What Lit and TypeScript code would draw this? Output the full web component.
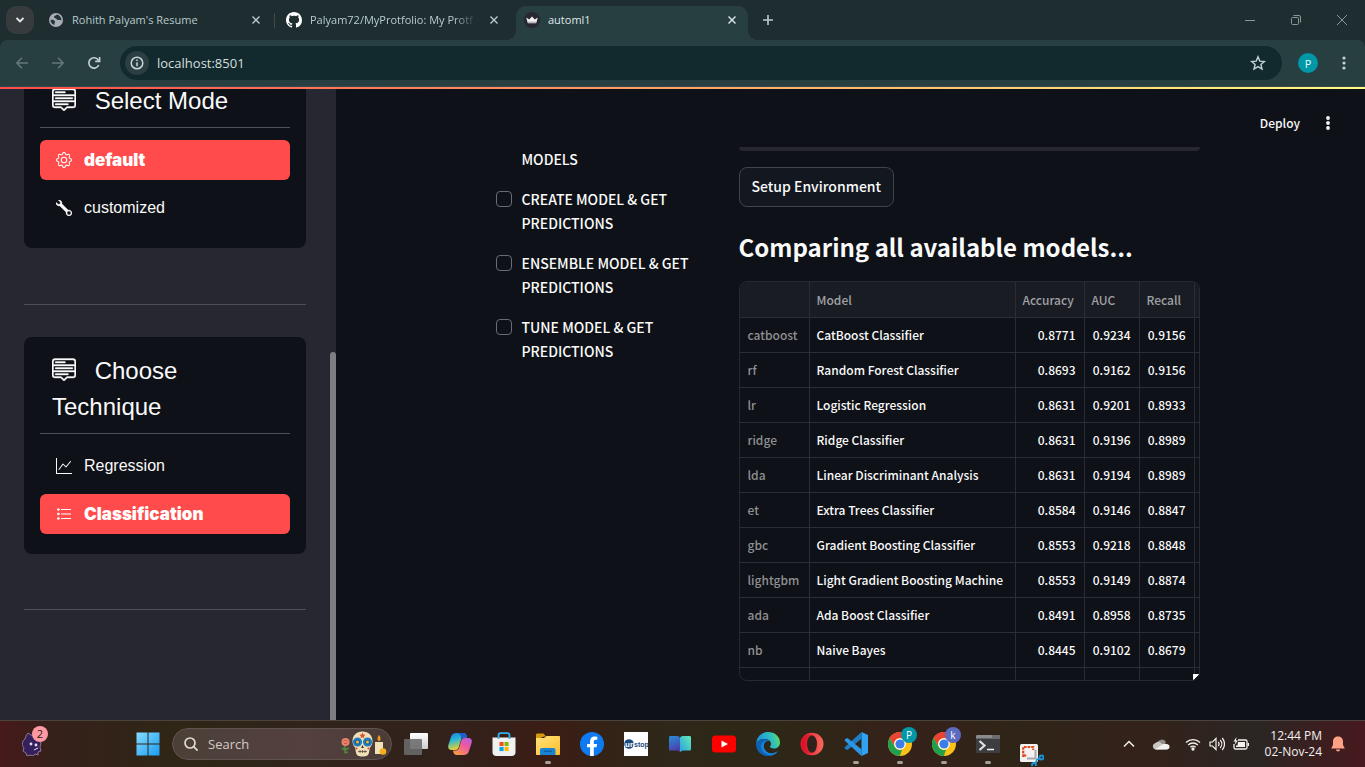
import { LitElement, html, css, svg, nothing } from "lit";
import { customElement, property } from "lit/decorators.js";
import { classMap } from "lit/directives/class-map.js";

const menuUp = svg`<svg class="glyph" viewBox="0 0 16 16" width="24" height="24" fill="currentColor" stroke="currentColor" stroke-width=".25" aria-hidden="true"><path d="M7.646 15.854a.5.5 0 0 0 .708 0L10.207 14H14a2 2 0 0 0 2-2V3a2 2 0 0 0-2-2H2a2 2 0 0 0-2 2v9a2 2 0 0 0 2 2h3.793zM1 9V6h14v3zm14 1v2a1 1 0 0 1-1 1h-3.793a1 1 0 0 0-.707.293l-1.5 1.5-1.5-1.5A1 1 0 0 0 5.793 13H2a1 1 0 0 1-1-1v-2zm0-5H1V3a1 1 0 0 1 1-1h12a1 1 0 0 1 1 1zM2 11.5a.5.5 0 0 0 .5.5h8a.5.5 0 0 0 0-1h-8a.5.5 0 0 0-.5.5m0-4a.5.5 0 0 0 .5.5h11a.5.5 0 0 0 0-1h-11a.5.5 0 0 0-.5.5m0-4a.5.5 0 0 0 .5.5h6a.5.5 0 0 0 0-1h-6a.5.5 0 0 0-.5.5"/></svg>`;

const optionIcons: Record<string, unknown> = {
  gear: svg`<svg viewBox="0 0 16 16" width="16" height="16" fill="currentColor" aria-hidden="true"><path d="M8 4.754a3.246 3.246 0 1 0 0 6.492 3.246 3.246 0 0 0 0-6.492M5.754 8a2.246 2.246 0 1 1 4.492 0 2.246 2.246 0 0 1-4.492 0"/><path d="M9.796 1.343c-.527-1.79-3.065-1.79-3.592 0l-.094.319a.873.873 0 0 1-1.255.52l-.292-.16c-1.64-.892-3.433.902-2.54 2.541l.159.292a.873.873 0 0 1-.52 1.255l-.319.094c-1.79.527-1.79 3.065 0 3.592l.319.094a.873.873 0 0 1 .52 1.255l-.16.292c-.892 1.64.901 3.434 2.541 2.54l.292-.159a.873.873 0 0 1 1.255.52l.094.319c.527 1.79 3.065 1.79 3.592 0l.094-.319a.873.873 0 0 1 1.255-.52l.292.16c1.64.893 3.434-.902 2.54-2.541l-.159-.292a.873.873 0 0 1 .52-1.255l.319-.094c1.79-.527 1.79-3.065 0-3.592l-.319-.094a.873.873 0 0 1-.52-1.255l.16-.292c.893-1.64-.902-3.433-2.541-2.54l-.292.159a.873.873 0 0 1-1.255-.52zm-2.633.283c.246-.835 1.428-.835 1.674 0l.094.319a1.873 1.873 0 0 0 2.693 1.115l.291-.16c.764-.415 1.6.42 1.184 1.185l-.159.292a1.873 1.873 0 0 0 1.116 2.692l.318.094c.835.246.835 1.428 0 1.674l-.319.094a1.873 1.873 0 0 0-1.115 2.693l.16.291c.415.764-.42 1.6-1.185 1.184l-.291-.159a1.873 1.873 0 0 0-2.693 1.116l-.094.318c-.246.835-1.428.835-1.674 0l-.094-.319a1.873 1.873 0 0 0-2.692-1.115l-.292.16c-.764.415-1.6-.42-1.184-1.185l.159-.291A1.873 1.873 0 0 0 1.945 8.93l-.319-.094c-.835-.246-.835-1.428 0-1.674l.319-.094A1.873 1.873 0 0 0 3.06 4.377l-.16-.292c-.415-.764.42-1.6 1.185-1.184l.292.159a1.873 1.873 0 0 0 2.692-1.115z"/></svg>`,
  wrench: svg`<svg viewBox="0 0 16 16" width="16" height="16" fill="currentColor" stroke="currentColor" stroke-width=".3" aria-hidden="true"><path d="M.102 2.223A3.004 3.004 0 0 0 3.78 5.897l6.341 6.252A3.003 3.003 0 0 0 13 16a3 3 0 1 0-.851-5.878L5.897 3.781A3.004 3.004 0 0 0 2.223.1l2.141 2.142L4 4l-1.757.364zm13.37 9.019.528.026.287.445.445.287.026.529L15 13l-.242.471-.026.529-.445.287-.287.445-.529.026L13 15l-.471-.242-.529-.026-.287-.445-.445-.287-.026-.529L11 13l.242-.471.026-.529.445-.287.287-.445.529-.026L13 11z"/></svg>`,
  graph: svg`<svg viewBox="0 0 16 16" width="16" height="16" fill="currentColor" aria-hidden="true"><path d="M0 0h1v15h15v1H0zm14.817 3.113a.5.5 0 0 1 .07.704l-4.5 5.5a.5.5 0 0 1-.74.037L7.06 6.767l-3.656 5.027a.5.5 0 0 1-.808-.588l4-5.5a.5.5 0 0 1 .758-.06l2.609 2.61 4.15-5.073a.5.5 0 0 1 .704-.07"/></svg>`,
  list: svg`<svg viewBox="0 0 16 16" width="16" height="16" fill="currentColor" aria-hidden="true"><path d="M5 3h10v1H5zM5 7.500h10v1H5zM5 12h10v1H5z"/><circle cx="2.400" cy="3.500" r="1.300"/><circle cx="2.400" cy="8" r="1.300"/><circle cx="2.400" cy="12.500" r="1.300"/></svg>`,
};

interface Option {
  label: string;
  icon: string;
  selected?: boolean;
}

@customElement("option-menu")
export class OptionMenu extends LitElement {
  @property() heading = "";
  @property({ attribute: false }) options: Option[] = [];

  static styles = css`
    :host {
      display: block;
      padding: 16px 16px 20px;
      border-radius: 8px;
      background: #0e1117;
      color: #fafafa;
      font-family: "Liberation Sans", Arial, sans-serif;
    }
    h2 {
      margin: 0;
      padding: 0 12px 8px;
      border-bottom: 1px solid #4d5157;
      font-size: 24px;
      font-weight: 400;
      line-height: 36px;
    }
    .glyph {
      margin-right: 12px;
      vertical-align: -2px;
    }
    ul {
      display: grid;
      gap: 8px;
      margin: 12px 0 0;
      padding: 0;
      list-style: none;
    }
    a {
      display: flex;
      align-items: center;
      gap: 12px;
      height: 40px;
      padding: 0 16px;
      border-radius: 6px;
      color: #fafafa;
      font-size: 16px;
      line-height: 24px;
      text-decoration: none;
    }
    .selected {
      background: #ff4b4b;
      color: #fff;
      font-family: Inter, sans-serif;
      font-size: 17px;
      font-weight: 900;
    }
  `;

  render() {
    return html`
      <h2>${menuUp} ${this.heading}</h2>
      <ul>
        ${this.options.map(
          (o) => html`<li>
            <a href="#${o.label}" class=${classMap({ selected: !!o.selected })}>${optionIcons[o.icon]}<span>${o.label}</span></a>
          </li>`
        )}
      </ul>
    `;
  }
}

const closeX = (s = 8) =>
  svg`<svg viewBox="0 0 8 8" width=${s} height=${s} fill="none" stroke="currentColor" stroke-width="1.400" aria-hidden="true"><path d="M.5.5l7 7M7.500.5l-7 7"/></svg>`;

const favicons: Record<string, unknown> = {
  globe: svg`<svg viewBox="0 0 16 16" width="16" height="16" aria-hidden="true"><circle cx="8" cy="8" r="7" fill="#a9adb5"/><path d="M2.500 8c2-.6 4 .2 4.500 1.400.4 1.200-1 1.600-.6 3.600-2.200-.6-3.800-2.600-3.900-5zM9 2.600C7.800 3.800 6 3.600 6 5c0 1.600 2.200 1 3 2.400.6 1.200 2.600.2 4.500 1-.1-2.800-2-5.200-4.500-5.800z" fill="#243437"/></svg>`,
  github: svg`<svg viewBox="0 0 16 16" width="16" height="16" fill="#fff" aria-hidden="true"><path d="M8 0C3.580 0 0 3.580 0 8c0 3.540 2.290 6.530 5.470 7.590.4.070.55-.17.55-.38 0-.19-.010-.82-.010-1.490-2.010.37-2.530-.49-2.690-.94-.090-.23-.48-.94-.82-1.130-.28-.15-.68-.52-.010-.53.63-.010 1.080.58 1.230.82.72 1.210 1.870.87 2.330.66.070-.52.28-.87.51-1.070-1.780-.2-3.640-.89-3.640-3.950 0-.87.31-1.590.82-2.150-.080-.2-.36-1.020.080-2.120 0 0 .67-.21 2.200.82.64-.18 1.320-.27 2-.27s1.360.09 2 .27c1.530-1.040 2.200-.82 2.200-.82.44 1.100.16 1.920.08 2.120.51.56.82 1.270.82 2.150 0 3.070-1.870 3.750-3.650 3.950.29.25.54.73.54 1.480 0 1.070-.010 1.930-.010 2.200 0 .21.15.46.55.38A8.010 8.010 0 0 0 16 8c0-4.420-3.580-8-8-8"/></svg>`,
  crown: svg`<svg viewBox="0 0 16 16" width="16" height="16" aria-hidden="true"><circle cx="8" cy="8" r="8" fill="#262730"/><path d="M2.200 5.500 5.200 7.400 8 4.500l2.800 2.900 3-1.900-1.600 5.700H3.800z" fill="#f2f2f2"/><path d="M4 10.200h8" stroke="#8b8b90" stroke-width=".8"/></svg>`,
};

const chrome = svg`<circle cx="12" cy="12" r="12" fill="#fbc116"/><path d="M1.600 6A12 12 0 0 1 22.400 6H12a6 6 0 0 0-5.200 9z" fill="#ea4335"/><path d="M1.600 6 6.800 15A6 6 0 0 0 14 17.700L11.800 24A12 12 0 0 1 1.600 6z" fill="#1ea04f"/><circle cx="12" cy="12" r="5.800" fill="#fff"/><circle cx="12" cy="12" r="4.600" fill="#3b7de9"/>`;

interface TaskApp {
  name: string;
  art: unknown;
  running?: boolean;
  badge?: string;
  tint?: string;
  low?: boolean;
}

const apps: TaskApp[] = [
  {
    name: "Task View",
    art: svg`<defs><linearGradient id="tv" x2="0" y2="1"><stop stop-color="#fff"/><stop offset="1" stop-color="#ccc"/></linearGradient></defs><rect x="6" y="1" width="18" height="16" rx="1" fill="url(#tv)"/><rect x="0" y="7" width="18" height="16" rx="1" fill="#6b6b6b" fill-opacity=".88"/>`,
  },
  {
    name: "Copilot",
    art: svg`<defs><linearGradient id="cp1" x2="0.3" y2="1"><stop stop-color="#1b7fe0"/><stop offset=".45" stop-color="#27b8d8"/><stop offset="1" stop-color="#e9d229"/></linearGradient><linearGradient id="cp2" x1="1" x2="0.3" y2="1"><stop stop-color="#b15be8"/><stop offset=".5" stop-color="#ee5a9c"/><stop offset="1" stop-color="#f7974a"/></linearGradient></defs><path d="M8.500 1h7c1.600 0 2.500 1 3 2.500L19 5.500h-2.500c-2 0-3 1-3.600 2.800l-2 6.400C10.200 17 9.400 18 7 18H3.500C.5 18-.3 15.600.4 13L3 5C3.800 2.400 5.500 1 8.500 1z" fill="url(#cp1)"/><path d="M15.500 23h-7c-1.600 0-2.500-1-3-2.500L5 18.500h2.500c2 0 3-1 3.600-2.800l2-6.400C13.800 7 14.600 6 17 6h3.500c3 0 3.800 2.400 3.100 5L21 19c-.8 2.600-2.500 4-5.500 4z" fill="url(#cp2)"/><path d="M8.500 1h7c1.600 0 2.500 1 3 2.500L19 5.500h-2.500c-1.500 0-2.500.6-3.100 1.700C13 4 12 1 8.500 1z" fill="#1e5fd0"/>`,
  },
  {
    name: "Microsoft Store",
    art: svg`<path d="M.5 5.500h23V20c0 2.500-1.300 4-4 4h-15c-2.700 0-4-1.500-4-4z" fill="#f1f1f1"/><path d="M6.500 7V3.500C6.500 2 7 1.200 8.500 1.200h7c1.500 0 2 .8 2 2.300V7" fill="none" stroke="#2fb4e8" stroke-width="1.800"/><path d="M7.500 10H11.600V14.100H7.500z" fill="#f25022"/><path d="M12.500 10h4.100v4.100h-4.100z" fill="#7fba00"/><path d="M7.500 15H11.600v4.100H7.500z" fill="#00a4ef"/><path d="M12.500 15h4.100v4.100h-4.100z" fill="#ffb900"/>`,
  },
  {
    name: "File Explorer",
    running: true,
    art: svg`<defs><linearGradient id="fe" x2="1" y2="1"><stop stop-color="#ffe27a"/><stop offset="1" stop-color="#fcbf2c"/></linearGradient></defs><path d="M0 3c0-1 .6-1.500 1.500-1.500h6L10 4.500h-2L0 8z" fill="#d99a0a"/><path d="M0 6h8l2.500-2H23c.7 0 1 .4 1 1v17c0 .6-.4 1-1 1H1c-.6 0-1-.4-1-1z" fill="url(#fe)"/><path d="M4 23v-5c0-1.200.8-2 2-2h11.500c1.200 0 2 .8 2 2v5z" fill="#1a84d4"/><path d="M8 18.500h8v1.500H8z" fill="#0e61a8"/>`,
  },
  {
    name: "Facebook",
    art: svg`<circle cx="12" cy="12" r="12" fill="#0f7bf2"/><path d="M16.500 15.300l.6-3.400h-3.300V9.600c0-1 .5-1.900 2-1.900h1.500V4.800s-1.400-.3-2.700-.3c-2.800 0-4.500 1.700-4.500 4.700v2.700H7v3.400h3.100V24a12 12 0 0 0 3.700 0v-8.700z" fill="#fff"/>`,
  },
  {
    name: "Unstop",
    art: svg`<rect width="24" height="24" fill="#fff"/><circle cx="5" cy="12" r="4.800" fill="#1c4980"/><text x="1" y="15" font-family="Liberation Sans, sans-serif" font-weight="700" font-size="8" fill="#fff">un</text><text x="10" y="15" font-family="Liberation Sans, sans-serif" font-weight="700" font-size="7" fill="#1c4980">stop</text>`,
  },
  {
    name: "Microsoft 365",
    art: svg`<defs><linearGradient id="rd" x2=".3" y2="1"><stop stop-color="#2b8fd6"/><stop offset="1" stop-color="#4a3fae"/></linearGradient><linearGradient id="re" x2="1" y1="1" y2="0"><stop stop-color="#2a9fe0"/><stop offset="1" stop-color="#62ecb8"/></linearGradient></defs><path d="M1 5.500C1 4.500 1.700 4 2.500 4H9c2 0 3 1 3 2.500V20c-.8-1.200-2-1.500-3.500-1.500h-6C1.600 18.500 1 18 1 17z" fill="url(#rd)"/><path d="M23 5.500c0-1-.7-1.500-1.500-1.500H15c-2 0-3 1-3 2.500V20.500c.8-1.200 2-2 3.500-2h6c.9 0 1.500-.5 1.500-1.500z" fill="url(#re)"/>`,
  },
  {
    name: "YouTube",
    art: svg`<rect y="3.500" width="24" height="17" rx="3.500" fill="#f00"/><path d="M9.500 8.500 16 12l-6.500 3.500z" fill="#fff"/>`,
  },
  {
    name: "Microsoft Edge",
    art: svg`<defs><linearGradient id="eg" y1=".2" x2="1"><stop stop-color="#1d93dc"/><stop offset=".6" stop-color="#2cc0c0"/><stop offset="1" stop-color="#6ee04a"/></linearGradient></defs><path d="M0 12C.5 5 5.500 0 12 0c7.200 0 12 5 12 10.500 0 4-3 6-6 6-2.600 0-4-1-4-2 0-.7 1-1 1-2.600C15 9.500 12.500 7 9 7 4.500 7 .5 9.500 0 12z" fill="url(#eg)"/><path d="M0 12c.5-3 4-5 8.500-5 2 0 3.800.8 4.900 2-3-.5-5.600 1.500-5.600 5 0 4.500 4.200 8 9.200 7.200 2-.3 3.500-1.200 5-2.200C20 22 16.500 24 12 24 5.500 24 0 19 0 12z" fill="#0d62b4"/><path d="M7.800 14c0 4.500 4.200 8 9.200 7.200 2-.3 3.500-1.200 5-2.200-1 1.700-3 3.300-5 4.100C11 24 5 20 5 14.500c0-3 2-5.500 5.500-6 1.100-.1 2.300.1 2.900.5-3-.5-5.600 1.500-5.600 5z" fill="#1583d6"/>`,
  },
  {
    name: "Opera",
    art: svg`<defs><linearGradient id="op" x2="1"><stop stop-color="#e8102a"/><stop offset="1" stop-color="#f86a5e"/></linearGradient></defs><ellipse cx="12" cy="12" rx="11.500" ry="11.200" fill="url(#op)"/><path d="M12 3c-3 0-5.500 4-5.500 9s2.500 9 5.500 9c-5 2-10-2-10-9s5-11 10-9z" fill="#c00a1c" fill-opacity=".4"/><ellipse cx="12" cy="12" rx="5" ry="8.800" fill="#30211a"/>`,
  },
  {
    name: "Visual Studio Code",
    running: true,
    art: svg`<path d="M17.500 0 24 3v18l-6.500 3z" fill="#2fa4f2"/><path d="M17.500 0v6.800L3.500 18 .8 16.800v-1.500z" fill="#1c7ec9"/><path d="M17.500 24v-6.800L3.500 6 .8 7.200v1.500z" fill="#2b97e4"/>`,
  },
  { name: "Chrome, profile P", running: true, badge: "P", tint: "teal", art: chrome },
  { name: "Chrome, profile k", running: true, badge: "k", tint: "indigo", art: chrome },
  {
    name: "Terminal",
    running: true,
    art: svg`<rect y="3" width="24" height="18" rx="1.500" fill="#3d3e42"/><path d="M0 4.500C0 3.500.6 3 1.500 3h21c.9 0 1.500.5 1.500 1.500V6.500H0z" fill="#8b8b8e"/><path d="M16 3h6.500c.9 0 1.500.5 1.500 1.500V6.500h-8z" fill="#6d6d70"/><path d="M3.500 9 8.500 13.500l-5 4.500" fill="none" stroke="#e2e2e2" stroke-width="2.200"/><path d="M11 17.500h7" stroke="#f2f2f2" stroke-width="1.500"/>`,
  },
  {
    name: "Snipping Tool",
    low: true,
    art: svg`<rect x="0" y="2" width="18" height="18" rx="1.500" fill="#f2f2f2"/><path d="M3.200 15V5h10v3" fill="none" stroke="#e0491d" stroke-width="2.200" stroke-dasharray="2.600 1"/><path d="M3.200 13.500h3" stroke="#e0491d" stroke-width="2.200"/><path d="M15.500 8v8.500H7" fill="none" stroke="#a8a8a8" stroke-width="2"/><circle cx="21.500" cy="15.500" r="2" fill="none" stroke="#1997dc" stroke-width="1.800"/><circle cx="14" cy="23" r="2" fill="none" stroke="#1997dc" stroke-width="1.800"/><path d="M15.500 21.500l1.500-4 3-1" fill="none" stroke="#1997dc" stroke-width="1.600"/>`,
  },
];

const rows = [
  ["catboost", "CatBoost Classifier", "0.8771", "0.9234", "0.9156"],
  ["rf", "Random Forest Classifier", "0.8693", "0.9162", "0.9156"],
  ["lr", "Logistic Regression", "0.8631", "0.9201", "0.8933"],
  ["ridge", "Ridge Classifier", "0.8631", "0.9196", "0.8989"],
  ["lda", "Linear Discriminant Analysis", "0.8631", "0.9194", "0.8989"],
  ["et", "Extra Trees Classifier", "0.8584", "0.9146", "0.8847"],
  ["gbc", "Gradient Boosting Classifier", "0.8553", "0.9218", "0.8848"],
  ["lightgbm", "Light Gradient Boosting Machine", "0.8553", "0.9149", "0.8874"],
  ["ada", "Ada Boost Classifier", "0.8491", "0.8958", "0.8735"],
  ["nb", "Naive Bayes", "0.8445", "0.9102", "0.8679"],
  ["", "", "", "", ""],
];

@customElement("browser-chrome")
export class BrowserChrome extends LitElement {
  static styles = css`
    :host {
      display: block;
      background: #1d2d30;
      color: #b9cbcc;
      font-family: "Open Sans", "Noto Sans", sans-serif;
    }
    button {
      display: grid;
      place-items: center;
      padding: 0;
      border: 0;
      background: none;
      color: inherit;
      font: inherit;
    }
    .strip {
      display: flex;
      align-items: flex-start;
      height: 34px;
      padding: 6px 0 0 6px;
    }
    .search-tabs {
      width: 28px;
      height: 28px;
      margin-right: 6px;
      border-radius: 10px;
      background: #373b3d;
      color: #e6eaea;
    }
    .tab {
      position: relative;
      display: flex;
      align-items: center;
      gap: 8px;
      box-sizing: border-box;
      width: 238px;
      height: 28px;
      padding: 0 14px 0 8px;
      font-size: 11px;
      line-height: 16px;
    }
    .tab + .tab:not(.active)::before {
      content: "";
      position: absolute;
      left: -4px;
      top: 7px;
      width: 1px;
      height: 15px;
      background: #3d4a4d;
    }
    .active {
      width: 232px;
      height: 34px;
      padding-bottom: 6px;
      padding-right: 8px;
      border-radius: 10px 10px 0 0;
      background: #283f42;
      color: #dfe8e8;
    }
    .active::before,
    .active::after {
      content: "";
      position: absolute;
      bottom: 0;
      width: 10px;
      height: 10px;
    }
    .active::before {
      left: -10px;
      background: radial-gradient(circle at 0 0, transparent 10px, #283f42 10px);
    }
    .active::after {
      right: -10px;
      background: radial-gradient(circle at 100% 0, transparent 10px, #283f42 10px);
    }
    .title {
      flex: 1;
      overflow: hidden;
      white-space: nowrap;
    }
    .fade {
      mask-image: linear-gradient(to right, #000 86%, transparent 99%);
    }
    .close {
      width: 16px;
      height: 16px;
    }
    .add {
      width: 28px;
      height: 28px;
      margin-left: 6px;
    }
    .window {
      display: flex;
      margin-left: auto;
      color: #8d9799;
    }
    .window button {
      width: 46px;
      height: 28px;
    }
    .toolbar {
      display: flex;
      align-items: center;
      box-sizing: border-box;
      height: 47px;
      padding: 0 3px 0 4px;
      border-radius: 8px 8px 0 0;
      border-bottom: 1px solid #35484b;
      background: #283f42;
    }
    .nav {
      width: 36px;
      height: 34px;
      color: #c4d2d3;
    }
    .off {
      color: #64787a;
    }
    .address {
      display: flex;
      flex: 1;
      align-items: center;
      gap: 8px;
      height: 34px;
      margin: 0 8px;
      padding: 0 16px 0 5px;
      border-radius: 17px;
      background: #12292d;
    }
    .info {
      width: 24px;
      height: 24px;
      border-radius: 12px;
      background: #2b3f42;
    }
    input {
      flex: 1;
      min-width: 0;
      padding: 0;
      border: 0;
      outline: 0;
      background: none;
      color: #d5dfdf;
      font: 13px/20px "Open Sans", "Noto Sans", sans-serif;
    }
    .avatar {
      width: 20px;
      height: 20px;
      margin: 0 8px;
      border-radius: 10px;
      background: #0097a7;
      color: #e8fbfd;
      font-size: 11px;
    }
  `;

  private tab(icon: string, title: string, active = false, fade = false) {
    return html`<div class=${classMap({ tab: true, active })}>
      ${favicons[icon]}<span class=${classMap({ title: true, fade })}>${title}</span>
      <button class="close" aria-label="Close ${title}">${closeX()}</button>
    </div>`;
  }

  render() {
    return html`
      <div class="strip">
        <button class="search-tabs" aria-label="Search tabs">
          <svg viewBox="0 0 8 6" width="8" height="6" fill="none" stroke="currentColor" stroke-width="1.800"><path d="M.5 1 4 4.500 7.500 1" /></svg>
        </button>
        ${this.tab("globe", "Rohith Palyam's Resume")}
        ${this.tab("github", "Palyam72/MyProtfolio: My Protf", false, true)}
        ${this.tab("crown", "automl1", true)}
        <button class="add" aria-label="New tab">
          <svg viewBox="0 0 10 10" width="10" height="10" stroke="currentColor" stroke-width="1.600"><path d="M5 0v10M0 5h10" /></svg>
        </button>
        <div class="window">
          <button aria-label="Minimize"><svg viewBox="0 0 10 10" width="10" height="10" stroke="currentColor"><path d="M0 5.500h10" /></svg></button>
          <button aria-label="Restore">
            <svg viewBox="0 0 10 10" width="10" height="10" fill="none" stroke="currentColor"><rect x=".5" y="2.500" width="7" height="7" rx="1" /><path d="M2.500.5H8A1.500 1.500 0 0 1 9.500 2v5.500" /></svg>
          </button>
          <button aria-label="Close window"><svg viewBox="0 0 10 10" width="10" height="10" stroke="currentColor"><path d="M0 0l10 10M10 0 0 10" /></svg></button>
        </div>
      </div>
      <div class="toolbar">
        <button class="nav off" aria-label="Back"><svg viewBox="0 0 12 12" width="12" height="12" fill="none" stroke="currentColor" stroke-width="1.500"><path d="M12 6H1M6 .8.9 6 6 11.200" /></svg></button>
        <button class="nav off" aria-label="Forward"><svg viewBox="0 0 12 12" width="12" height="12" fill="none" stroke="currentColor" stroke-width="1.500"><path d="M0 6h11M6 .8 11.100 6 6 11.200" /></svg></button>
        <button class="nav" aria-label="Reload"><svg viewBox="0 0 14 14" width="14" height="14" fill="none" stroke="currentColor" stroke-width="1.600"><path d="M11.800 9a5.200 5.200 0 1 1-.6-5.200L12.400 5" /><path d="M12.600 1v4.400H8.200" /></svg></button>
        <div class="address">
          <button class="info" aria-label="Site information">
            <svg viewBox="0 0 14 14" width="14" height="14" fill="none" stroke="#c9d4d4" stroke-width="1.500"><circle cx="7" cy="7" r="5.800" /><path d="M7 6.200v4M7 3.600v1.500" /></svg>
          </button>
          <input aria-label="Address" .value=${"localhost:8501"} />
          <button class="star" aria-label="Bookmark">
            <svg viewBox="0 0 16 16" width="16" height="16" fill="none" stroke="#c4d2d3" stroke-width="1.400"><path d="m8 1.800 1.800 4.300 4.600.4-3.500 3 1.100 4.500L8 11.600 4 14l1.100-4.500-3.500-3 4.600-.4z" /></svg>
          </button>
        </div>
        <button class="avatar" aria-label="Profile">P</button>
        <button class="nav" aria-label="Menu"><svg viewBox="0 0 4 14" width="4" height="14" fill="currentColor"><circle cx="2" cy="2" r="1.600" /><circle cx="2" cy="7" r="1.600" /><circle cx="2" cy="12" r="1.600" /></svg></button>
      </div>
    `;
  }
}

@customElement("task-bar")
export class TaskBar extends LitElement {
  static styles = css`
    :host {
      display: flex;
      align-items: center;
      box-sizing: border-box;
      height: 47px;
      border-top: 1px solid #4a443c;
      background: linear-gradient(
        90deg,
        #47191b 0,
        #35211a 4%,
        #2f2616 13%,
        #30241b 22%,
        #32211c 33%,
        #3b1d15 40%,
        #2d2819 49%,
        #2f2617 60%,
        #36211a 66%,
        #2f2418 74%,
        #33221a 84%,
        #2b2623 92%,
        #47191e 100%
      );
      color: #f4f0ee;
      font-family: "Open Sans", "Noto Sans", sans-serif;
    }
    button {
      position: relative;
      display: grid;
      flex: none;
      place-items: center;
      width: 44px;
      height: 44px;
      padding: 0;
      border: 0;
      background: none;
      color: inherit;
      font: inherit;
    }
    .widgets {
      margin-left: 10px;
      margin-right: 72px;
    }
    .count {
      position: absolute;
      right: 6px;
      top: 4px;
      width: 16px;
      height: 16px;
      border-radius: 8px;
      background: #ff99a4;
      color: #221;
      font-size: 11px;
      line-height: 16px;
    }
    .search {
      display: flex;
      align-items: center;
      gap: 10px;
      box-sizing: border-box;
      width: 220px;
      height: 32px;
      margin: 0 2px;
      padding: 0 4px 0 11px;
      border: 1px solid #5f5450;
      border-radius: 16px;
      background: linear-gradient(90deg, #4b4038, #54403f 60%, #4a3c37);
    }
    .search svg {
      flex: none;
    }
    input {
      flex: 1;
      min-width: 0;
      padding: 0;
      border: 0;
      outline: 0;
      background: none;
      color: #cfc7c4;
      font: 13px/20px "Open Sans", "Noto Sans", sans-serif;
    }
    input::placeholder {
      color: #d3cbc8;
      opacity: 1;
    }
    .running::after {
      content: "";
      position: absolute;
      bottom: 2px;
      width: 6px;
      height: 3px;
      border-radius: 2px;
      background: #a5a09c;
    }
    .low {
      align-items: end;
    }
    .badge {
      position: absolute;
      right: 5px;
      top: 5px;
      width: 16px;
      height: 16px;
      border-radius: 8px;
      color: #fff;
      font-size: 10px;
      line-height: 16px;
    }
    .teal {
      background: #0097a7;
    }
    .indigo {
      background: #5c6bc0;
    }
    .tray {
      display: flex;
      align-items: center;
      margin-left: auto;
      padding-right: 19px;
    }
    .tray button {
      width: 24px;
    }
    .tray .wide {
      width: 40px;
    }
    .tray .clock {
      width: auto;
      margin-left: 12px;
      justify-items: end;
      align-content: center;
      font-size: 12px;
      line-height: 16px;
      white-space: nowrap;
    }
    .tray .bell {
      width: 16px;
      margin-left: 8px;
    }
  `;

  render() {
    return html`
      <button class="widgets" aria-label="Widgets">
        <svg viewBox="0 0 20 24" width="20" height="24"><path d="M4 4 6 1l3 2 4 1 3 4 3 3-1 4 1 4-3 1v3l-3-1-2 2-3-1-3 1-1-3-3-2 1-3-2-3 1-4 2-2z" fill="#35205e" stroke="#a58aa6" stroke-width=".8" /><circle cx="9" cy="12" r="1.400" fill="#e9def0" /><circle cx="14" cy="13" r="1.400" fill="#e9def0" /><path d="M12 18l4-2" stroke="#e9def0" /></svg>
        <span class="count">2</span>
      </button>
      <button aria-label="Start">
        <svg viewBox="0 0 24 24" width="24" height="24"><defs><linearGradient id="wn" x2="1" y2="1"><stop stop-color="#86dcff" /><stop offset="1" stop-color="#1a9cf2" /></linearGradient></defs><path d="M.5.5h11v11H.5zM12.500.5h11v11h-11zM.5 12.500h11v11H.5zM12.500 12.500h11v11h-11z" fill="url(#wn)" /></svg>
      </button>
      <div class="search">
        <svg viewBox="0 0 14 14" width="14" height="14" fill="none" stroke="#e0dbd8" stroke-width="1.700"><circle cx="6" cy="6" r="5" /><path d="m9.600 9.600 4 4" /></svg>
        <input placeholder="Search" aria-label="Search" />
        <svg viewBox="0 0 46 26" width="46" height="26" aria-hidden="true">
          <path d="M4 14v8M4 19l-3-2M4 19l4-2M4 22l3-1" stroke="#4f8a3c" stroke-width="1.600" fill="none" />
          <circle cx="4.500" cy="11" r="4" fill="#e8836a" /><path d="M2.500 10.500c1-1.500 3-1.500 4 0M3 12.500h3" stroke="#c65245" fill="none" />
          <path d="M21.500.5c6 0 10 4 10 9.500 0 3-1 5-2.500 6.500l-1 5c-.5 3-2.500 4-6.500 4s-6-1-6.500-4l-1-5C12.500 15 11.500 13 11.500 10c0-5.500 4-9.500 10-9.500z" fill="#f0dfb8" />
          <circle cx="16.500" cy="11" r="4.600" fill="#1f80c8" /><circle cx="26.500" cy="11" r="4.600" fill="#1f80c8" />
          <circle cx="16.500" cy="11" r="2.600" fill="#1a5c94" /><circle cx="26.500" cy="11" r="2.600" fill="#1a5c94" />
          <circle cx="16.500" cy="11" r="1.500" fill="#f2b92c" /><circle cx="26.500" cy="11" r="1.500" fill="#f2b92c" />
          <path d="m21.500 1.500 1 2 2 .3-1.500 1.500.4 2-1.900-1-1.900 1 .4-2-1.500-1.500 2-.3z" fill="#d9532f" />
          <path d="m21.500 14 1.300 3h-2.600z" fill="#3a2c22" /><path d="M17 20.500h9M19 19v3M21.500 19v3M24 19v3" stroke="#5d4a3c" stroke-width=".8" />
          <circle cx="15.500" cy="17.500" r="1.100" fill="#d9532f" /><circle cx="27.500" cy="17.500" r="1.100" fill="#d9532f" />
          <path d="M34 11h8v12h-8z" fill="#f1e1b6" /><path d="M38 4c2 2.500 2 5.500 0 6-2-.5-2-3.500 0-6z" fill="#f39a1e" /><circle cx="42" cy="20.500" r="3.300" fill="#f4b01f" />
        </svg>
      </div>
      ${apps.map(
        (a) => html`<button class=${classMap({ running: !!a.running, low: !!a.low })} aria-label=${a.name}>
          <svg viewBox="0 0 24 24" width="24" height="24">${a.art}</svg>
          ${a.badge ? html`<span class="badge ${a.tint}">${a.badge}</span>` : nothing}
        </button>`
      )}
      <div class="tray">
        <button aria-label="Hidden icons"><svg viewBox="0 0 12 8" width="12" height="8" fill="none" stroke="currentColor" stroke-width="1.500"><path d="m1 6.500 5-5 5 5" /></svg></button>
        <button class="wide" aria-label="OneDrive"><svg viewBox="0 0 18 14" width="18" height="14"><path d="M5 6a5 5 0 0 1 9-1l-6 5z" fill="#8f8c8a" /><path d="M3.500 12.500A3.200 3.200 0 0 1 3 6.300 5 5 0 0 1 8 5l7.500 7.200z" fill="#c9c6c4" /><path d="M3 12.500 11 7a3.500 3.500 0 0 1 3.500 0c2.300.2 3 1.500 3 2.800 0 1.700-1.200 2.700-2.800 2.700z" fill="#f2f1f0" /></svg></button>
        <button aria-label="Wi-Fi"><svg viewBox="0 0 16 14" width="16" height="14" fill="none" stroke="currentColor" stroke-width="1.300"><path d="M1 5.500a10 10 0 0 1 14 0M3.200 8a6.800 6.800 0 0 1 9.600 0M5.400 10.300a3.700 3.700 0 0 1 5.200 0" /><circle cx="8" cy="12" r="1" fill="currentColor" /></svg></button>
        <button aria-label="Volume"><svg viewBox="0 0 16 14" width="16" height="14" fill="none" stroke="currentColor" stroke-width="1.200"><path d="M1 5h2.500L7 1.500v11L3.500 9H1zM9.200 5a3 3 0 0 1 0 4M11.200 3a6 6 0 0 1 0 8M13.200 1a9 9 0 0 1 0 12" /></svg></button>
        <button aria-label="Battery"><svg viewBox="0 0 16 14" width="16" height="14" fill="none" stroke="currentColor" stroke-width="1.300"><path d="M5 3h7.500C13.400 3 14 3.600 14 4.500v6c0 .9-.6 1.500-1.500 1.500h-10C1.600 12 1 11.400 1 10.500V7M15.500 6v3" /><path d="M5 5h7v5H3V8.500h1.500z" fill="currentColor" stroke="none" /><path d="M3.500 0 .5 4.500h2L1.500 8 5 3.500H3z" fill="currentColor" stroke="none" /></svg></button>
        <button class="clock" aria-label="Clock"><span>12:44 PM</span><span>02-Nov-24</span></button>
        <button class="bell" aria-label="Notifications"><svg viewBox="0 0 14 16" width="14" height="16" fill="#ffa184"><path d="M7 .5c3 0 5 2 5 5V9l1.800 3.500H.2L2 9V5.500c0-3 2-5 5-5zM5 13.500h4a2 2 0 0 1-4 0z" /></svg></button>
      </div>
    `;
  }
}

@customElement("app-root")
export class AppRoot extends LitElement {
  static styles = css`
    :host {
      display: flex;
      flex-direction: column;
      height: 100vh;
      overflow: hidden;
      background: #0e1117;
      color: #fafafa;
      font-family: "Noto Sans CJK JP", "Noto Sans CJK SC", sans-serif;
    }
    .decoration {
      flex: none;
      height: 2px;
      background: linear-gradient(90deg, #ff4b4b, #fffd80);
    }
    browser-chrome,
    task-bar {
      flex: none;
    }
    .page {
      display: flex;
      flex: 1;
      min-height: 0;
    }
    .sidebar {
      display: grid;
      flex: none;
      grid-template-columns: 1fr 6px;
      gap: 24px;
      width: 312px;
      padding-left: 24px;
      overflow: hidden;
      background: #262730;
    }
    .scrolled {
      margin-top: -22px;
    }
    .sidebar hr {
      height: 1px;
      margin: 56px 0 32px;
      border: 0;
      background: #4d4e56;
    }
    .sidebar hr:last-child {
      margin: 55px 0 0;
    }
    .track {
      padding-top: 263px;
      display: grid;
    }
    .thumb {
      border-radius: 3px 3px 0 0;
      background: #7d7d83;
    }
    main {
      display: flex;
      flex: 1;
      flex-direction: column;
      min-width: 0;
    }
    header {
      display: flex;
      flex: none;
      align-items: center;
      justify-content: flex-end;
      gap: 12px;
      height: 58px;
      padding: 9px 25px 0 0;
      box-sizing: border-box;
    }
    header button {
      display: grid;
      place-items: center;
      height: 24px;
      padding: 0 4px;
      border: 0;
      background: none;
      color: #fafafa;
      font: 500 12px/20px "Noto Sans CJK JP", "Noto Sans CJK SC", sans-serif;
    }
    .block {
      display: grid;
      flex: 1;
      grid-template-columns: 227px minmax(0, 1fr);
      gap: 16px;
      align-items: start;
      box-sizing: content-box;
      width: 100%;
      max-width: 704px;
      min-height: 0;
      margin: 0 auto;
      padding-right: 6px;
      overflow: hidden;
    }
    .steps {
      display: grid;
      gap: 16px;
    }
    .step {
      display: flex;
      align-items: flex-start;
      gap: 10px;
      font-size: 14px;
      font-weight: 500;
      line-height: 24px;
    }
    .step span {
      max-width: 180px;
    }
    .continued {
      padding-left: 26px;
    }
    .step input {
      flex: none;
      appearance: none;
      width: 16px;
      height: 16px;
      margin: 4px 0 0;
      border: 1px solid #6a6c73;
      border-radius: 4px;
      background: #0e1117;
    }
    .uploader {
      height: 4px;
      border-radius: 0 0 8px 8px;
      background: #262730;
    }
    .setup {
      display: block;
      height: 40px;
      margin: 16px 0 0;
      padding: 0 12px 2px;
      border: 1px solid #41444c;
      border-radius: 8px;
      background: #131720;
      color: #fafafa;
      font: 500 14px/24px "Noto Sans CJK JP", "Noto Sans CJK SC", sans-serif;
    }
    h1 {
      margin: 22px 0 16px;
      font-size: 24px;
      font-weight: 700;
      line-height: 36px;
      white-space: nowrap;
    }
    .frame {
      position: relative;
      height: 398px;
      overflow: hidden;
      border: 1px solid #262930;
      border-radius: 8px;
    }
    .resize {
      position: absolute;
      right: 0;
      bottom: 0;
      width: 6px;
      height: 6px;
      background: linear-gradient(135deg, #fff 55%, transparent 55%);
    }
    table {
      width: 100%;
      border-collapse: separate;
      border-spacing: 0;
      table-layout: fixed;
      font-size: 12px;
      font-weight: 500;
      line-height: 20px;
    }
    th,
    td {
      box-sizing: border-box;
      height: 35px;
      padding: 0 8px 0 7px;
      border-right: 1px solid #2a2d33;
      border-bottom: 1px solid #2a2d33;
      font-weight: 500;
      text-align: left;
      white-space: nowrap;
    }
    thead th {
      height: 36px;
      background: #1a1c24;
      color: #a0a1a5;
    }
    tbody th {
      color: #8e8f92;
    }
    th:first-child {
      padding-left: 8px;
    }
    th:last-child,
    td:last-child {
      padding: 0;
      border-right: 0;
    }
    .num {
      text-align: right;
    }
    .c-index {
      width: 70px;
    }
    .c-model {
      width: 206px;
    }
    .c-accuracy {
      width: 69px;
    }
    .c-score {
      width: 55px;
    }
  `;

  private step(id: string, label: string) {
    return html`<label class="step" for=${id}><input type="checkbox" id=${id} /><span>${label}</span></label>`;
  }

  render() {
    return html`
      <browser-chrome></browser-chrome>
      <div class="decoration"></div>
      <div class="page">
        <aside class="sidebar">
          <div class="scrolled">
            <option-menu
              heading="Select Mode"
              .options=${[
                { label: "default", icon: "gear", selected: true },
                { label: "customized", icon: "wrench" },
              ]}
            ></option-menu>
            <hr />
            <option-menu
              heading="Choose Technique"
              .options=${[
                { label: "Regression", icon: "graph" },
                { label: "Classification", icon: "list", selected: true },
              ]}
            ></option-menu>
            <hr />
          </div>
          <div class="track"><div class="thumb"></div></div>
        </aside>
        <main>
          <header>
            <button>Deploy</button>
            <button aria-label="Main menu">
              <svg viewBox="0 0 16 16" width="16" height="16" fill="currentColor"><circle cx="8" cy="3" r="1.900" /><circle cx="8" cy="8" r="1.900" /><circle cx="8" cy="13" r="1.900" /></svg>
            </button>
          </header>
          <div class="block">
            <div class="steps">
              <div class="step continued">MODELS</div>
              ${this.step("create", "CREATE MODEL & GET PREDICTIONS")}
              ${this.step("ensemble", "ENSEMBLE MODEL & GET PREDICTIONS")}
              ${this.step("tune", "TUNE MODEL & GET PREDICTIONS")}
            </div>
            <div>
              <div class="uploader"></div>
              <button class="setup">Setup Environment</button>
              <h1>Comparing all available models...</h1>
              <div class="frame">
                <table>
                  <colgroup>
                    <col class="c-index" />
                    <col class="c-model" />
                    <col class="c-accuracy" />
                    <col class="c-score" />
                    <col class="c-score" />
                    <col />
                  </colgroup>
                  <thead>
                    <tr>
                      <th></th>
                      <th>Model</th>
                      <th>Accuracy</th>
                      <th>AUC</th>
                      <th>Recall</th>
                      <th></th>
                    </tr>
                  </thead>
                  <tbody>
                    ${rows.map(
                      ([id, ...cells]) => html`<tr>
                        <th scope="row">${id}</th>
                        ${cells.map((c, i) => html`<td class=${classMap({ num: i > 0 })}>${c}</td>`)}
                        <td></td>
                      </tr>`
                    )}
                  </tbody>
                </table>
                <div class="resize"></div>
              </div>
            </div>
          </div>
        </main>
      </div>
      <task-bar></task-bar>
    `;
  }
}
